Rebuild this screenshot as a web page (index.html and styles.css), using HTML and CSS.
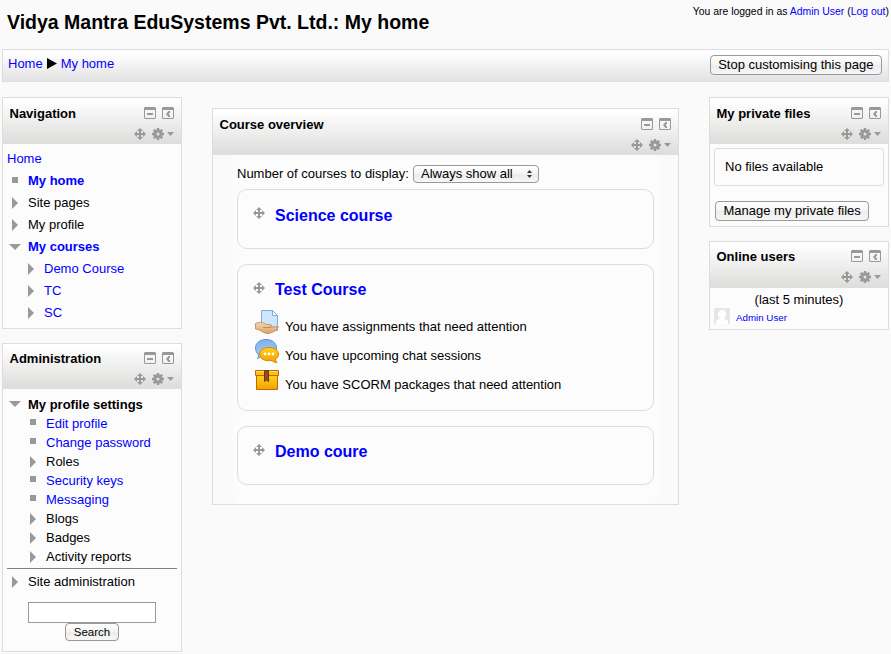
FILE: index.html
```html
<!DOCTYPE html>
<html lang="en">
<head>
<meta charset="utf-8">
<title>Vidya Mantra EduSystems Pvt. Ltd.: My home</title>
<link rel="stylesheet" href="styles.css">
</head>
<body>
<svg class="sprite" width="0" height="0">
  <defs>
    <linearGradient id="gold" x1="0" y1="0" x2="0" y2="1"><stop offset="0" stop-color="#ffd21f"/><stop offset="1" stop-color="#f5a000"/></linearGradient>
    <linearGradient id="blue" x1="0" y1="0" x2="0" y2="1"><stop offset="0" stop-color="#7fb2f0"/><stop offset="1" stop-color="#a9cffa"/></linearGradient>
    <linearGradient id="skin" x1="0" y1="0" x2="0" y2="1"><stop offset="0" stop-color="#f7d5ab"/><stop offset="1" stop-color="#dda26a"/></linearGradient>
  </defs>
  <symbol id="hide" viewBox="0 0 12 12"><path fill="#999" fill-rule="evenodd" d="M1 0h10l1 1v10l-1 1H1l-1-1V1zM1 3v8h10V3zM3 6h6v2H3z"/></symbol>
  <symbol id="dock" viewBox="0 0 12 12"><path fill="#999" fill-rule="evenodd" d="M1 0h10l1 1v10l-1 1H1l-1-1V1zM1 3v8h10V3zM6.500 4H8v2H7v2h1v2H6.500L4 7z"/></symbol>
  <symbol id="move" viewBox="0 0 12 12"><path fill="#999" d="M6 0l3 3H7v2h2V3l3 3-3 3V7H7v2h2l-3 3-3-3h2V7H3v2L0 6l3-3v2h2V3H3z"/></symbol>
  <symbol id="gear" viewBox="0 0 12 12"><path fill="#999" fill-rule="evenodd" d="M4.800 0h2.400v1.500l1.100.5 1.100-1.100 1.700 1.700L10 3.700l.5 1.100H12v2.400h-1.500L10 8.300l1.100 1.100-1.700 1.700L8.300 10l-1.100.5V12H4.800v-1.500L3.700 10l-1.100 1.100L.9 9.400 2 8.300l-.5-1.100H0V4.800h1.500L2 3.700.9 2.600 2.600.9 3.700 2l1.100-.5zM6 4.500a1.500 1.500 0 1 0 0 3 1.500 1.500 0 0 0 0-3z"/></symbol>
  <symbol id="closed" viewBox="0 0 12 12"><path fill="#999" d="M3 0l6 6-6 6z"/></symbol>
  <symbol id="open" viewBox="0 0 12 12"><path fill="#999" d="M0 3h12L6 9z"/></symbol>
  <symbol id="item" viewBox="0 0 12 12"><rect x="3" y="3" width="6" height="6" fill="#999"/></symbol>
</svg>

<header class="page-header">
  <h1>Vidya Mantra EduSystems Pvt. Ltd.: My home</h1>
  <div class="login">You are logged in as <a href="#">Admin User</a> (<a href="#">Log out</a>)</div>
</header>

<nav class="navbar">
  <div class="crumbs"><a href="#">Home</a><svg class="sep" viewBox="0 0 10 11"><path d="M0 0l10 5.500L0 11z"/></svg><a href="#">My home</a></div>
  <button class="btn">Stop customising this page</button>
</nav>

<div class="columns">
  <div class="side">
    <section class="block nav-block">
      <div class="head"><h2>Navigation</h2><div class="tools"><div><svg><use href="#hide"/></svg><svg><use href="#dock"/></svg></div><div><svg><use href="#move"/></svg><svg><use href="#gear"/></svg><i></i></div></div></div>
      <ul class="tree nav-tree">
        <li class="root"><a href="#">Home</a></li>
        <li class="current"><svg><use href="#item"/></svg><a class="strong" href="#">My home</a></li>
        <li><svg><use href="#closed"/></svg>Site pages</li>
        <li><svg><use href="#closed"/></svg>My profile</li>
        <li><svg><use href="#open"/></svg><a class="strong" href="#">My courses</a></li>
        <li class="sub"><svg><use href="#closed"/></svg><a href="#">Demo Course</a></li>
        <li class="sub"><svg><use href="#closed"/></svg><a href="#">TC</a></li>
        <li class="sub"><svg><use href="#closed"/></svg><a href="#">SC</a></li>
      </ul>
    </section>

    <section class="block admin-block">
      <div class="head"><h2>Administration</h2><div class="tools"><div><svg><use href="#hide"/></svg><svg><use href="#dock"/></svg></div><div><svg><use href="#move"/></svg><svg><use href="#gear"/></svg><i></i></div></div></div>
      <ul class="tree admin-tree">
        <li class="strong current"><svg><use href="#open"/></svg>My profile settings</li>
        <li class="sub leaf"><svg><use href="#item"/></svg><a href="#">Edit profile</a></li>
        <li class="sub leaf"><svg><use href="#item"/></svg><a href="#">Change password</a></li>
        <li class="sub"><svg><use href="#closed"/></svg>Roles</li>
        <li class="sub leaf"><svg><use href="#item"/></svg><a href="#">Security keys</a></li>
        <li class="sub leaf"><svg><use href="#item"/></svg><a href="#">Messaging</a></li>
        <li class="sub"><svg><use href="#closed"/></svg>Blogs</li>
        <li class="sub"><svg><use href="#closed"/></svg>Badges</li>
        <li class="sub"><svg><use href="#closed"/></svg>Activity reports</li>
        <li class="site"><svg><use href="#closed"/></svg>Site administration</li>
      </ul>
      <form class="search"><input type="text" aria-label="Search"><button type="button" class="btn">Search</button></form>
    </section>
  </div>

  <main class="block overview">
    <div class="head"><h2>Course overview</h2><div class="tools"><div><svg><use href="#hide"/></svg><svg><use href="#dock"/></svg></div><div><svg><use href="#move"/></svg><svg><use href="#gear"/></svg><i></i></div></div></div>
    <div class="content">
      <div class="count">Number of courses to display: <span class="select">Always show all<svg viewBox="0 0 5 8"><path fill="#333" d="M2.500 0L5 3H0zM0 5h5L2.500 8z"/></svg></span></div>
      <article class="course">
        <h3><svg><use href="#move"/></svg><a href="#">Science course</a></h3>
      </article>
      <article class="course tall">
        <h3><svg><use href="#move"/></svg><a href="#">Test Course</a></h3>
        <div class="notice">
          <svg viewBox="0 0 24 24"><path d="M6.500.5h11l5 5v15h-16z" fill="#cde6fb" stroke="#79addf"/><path d="M17.500.5v5h5z" fill="#fff" stroke="#79addf"/><path d="M.5 13.500c4-2 7-1 10 .5 2 1 5 0 6 1 .8 1-1 2-3 2.500 4 0 6-1.500 10-.5-2 4-7 6.500-12 6.500-4-1-6-4-11-4.500z" fill="url(#skin)" stroke="#bb814c" stroke-width=".8"/><path d="M8 17.500h6" stroke="#bb814c" stroke-width=".8"/></svg>
          You have assignments that need attention</div>
        <div class="notice">
          <svg viewBox="0 0 24 24"><path d="M11 .5C17 .5 21.500 4 21.500 9S17 17.500 11 17.500q-3 0-5-.7-1 2-3.500 2.700 1.500-2 .8-4Q.5 13 .5 9C.5 4 5 .5 11 .5z" fill="url(#blue)" stroke="#5e91d7"/><path d="M14 8.500c5.500 0 9.500 2.500 9.500 6.500 0 2.500-1 4-3 5 0 1.500.5 2.500 1.500 3.500-2.500 0-4-1-5-2-7 1-12.500-1.500-12.500-6.500 0-4 4-6.500 9.500-6.500z" fill="url(#gold)" stroke="#d18a00"/><g fill="#fff"><circle cx="10" cy="15" r="1.400"/><circle cx="14" cy="15" r="1.400"/><circle cx="18" cy="15" r="1.400"/></g></svg>
          You have upcoming chat sessions</div>
        <div class="notice">
          <svg viewBox="0 0 24 24"><path d="M1.500 7h21v14.500h-21z" fill="url(#gold)" stroke="#b96b00"/><path d="M.5 2.500h23v5H.5z" fill="#ffbd18" stroke="#b96b00"/><path d="M1 3.500h22" stroke="#ffdc68"/><path d="M9.500 2.500h4v11l-2-1.500-2 1.500z" fill="#935024" stroke="#733612"/></svg>
          You have SCORM packages that need attention</div>
      </article>
      <article class="course short">
        <h3><svg><use href="#move"/></svg><a href="#">Demo coure</a></h3>
      </article>
    </div>
  </main>

  <div class="side">
    <section class="block files">
      <div class="head"><h2>My private files</h2><div class="tools"><div><svg><use href="#hide"/></svg><svg><use href="#dock"/></svg></div><div><svg><use href="#move"/></svg><svg><use href="#gear"/></svg><i></i></div></div></div>
      <div class="empty">No files available</div>
      <button class="btn">Manage my private files</button>
    </section>
    <section class="block online">
      <div class="head"><h2>Online users</h2><div class="tools"><div><svg><use href="#hide"/></svg><svg><use href="#dock"/></svg></div><div><svg><use href="#move"/></svg><svg><use href="#gear"/></svg><i></i></div></div></div>
      <div class="period">(last 5 minutes)</div>
      <div class="user"><svg viewBox="0 0 16 16"><path fill="#e6e6e6" d="M0 0h16v16H0z"/><path fill="#fff" d="M8 2c2.500 0 4 1.700 4 4 0 1.500-.6 2.800-1.500 3.600v1.200l3 1.700c.6.400.7 1.500.7 3.500H1.800c0-2 .1-3.100.7-3.500l3-1.700V9.600C4.600 8.800 4 7.500 4 6c0-2.300 1.500-4 4-4z"/></svg><a href="#">Admin User</a></div>
    </section>
  </div>
</div>
</body>
</html>
```
FILE: styles.css
```css
* { box-sizing: border-box; }
body {
  margin: 0;
  height: 654px;
  overflow: hidden;
  background: #fafafa;
  color: #000;
  font: 13px/16px "Liberation Sans", Arial, sans-serif;
}
h1, h2, h3, ul { margin: 0; padding: 0; }
a { color: #00f; text-decoration: none; }
.sprite { position: absolute; }
.strong { font-weight: bold; }

.page-header {
  display: flex;
  justify-content: space-between;
  height: 49px;
  padding: 5px 2px 0 7px;
}
.page-header h1 { font-size: 19.5px; line-height: 34px; }
.login { font-size: 10.45px; line-height: 14px; }

.navbar {
  display: flex;
  justify-content: space-between;
  align-items: flex-start;
  width: 887px;
  height: 33px;
  margin-left: 2px;
  padding: 5px 6px 0 5px;
  border: 1px solid #ddd;
  background: linear-gradient(#fff 10%, #e2e2e2);
}
.crumbs { display: flex; align-items: center; padding-top: 1px; }
.sep { width: 10px; height: 11px; margin: -2px 4px 0 4px; }

.btn {
  height: 20px;
  padding: 0 7.5px;
  border: 1px solid #999;
  border-radius: 4px;
  background: linear-gradient(#fff, #f4f4f4 50%, #ececec 51%, #f6f6f6);
  color: #000;
  font: 13px/16px "Liberation Sans", Arial, sans-serif;
  white-space: nowrap;
}

.columns {
  display: grid;
  grid-template-columns: 180px 467px 180px;
  column-gap: 30px;
  align-items: start;
  padding: 15px 0 0 2px;
}
.side { display: flex; flex-direction: column; gap: 14px; }
.block { border: 1px solid #ddd; background: #fcfcfc; }
.head {
  display: flex;
  justify-content: space-between;
  height: 46px;
  padding: 8px 7px 0 6.5px;
  background: linear-gradient(#fff 5%, #dededd 95%);
}
.admin-block .head { height: 45px; padding-top: 7px; }
.online .head { padding-top: 7px; }
.head h2 { font-size: 13px; line-height: 16px; }
.tools > div { display: flex; justify-content: flex-end; gap: 6px; height: 21px; padding-top: 1px; }
.tools svg, .tree svg, h3 svg { width: 12px; height: 12px; flex: none; }
.tools i {
  width: 7px;
  height: 4px;
  margin: 4px 0 0 -3px;
  background: #999;
  clip-path: polygon(0 0, 100% 0, 50% 100%);
}

.tree { list-style: none; }
.tree li { display: flex; align-items: center; gap: 7px; padding-left: 6px; }
.tree .current svg { margin-top: -2px; }
.nav-block { height: 232px; }
.nav-tree { padding-top: 4px; }
.nav-tree li { height: 22px; }
.nav-tree .root { padding-left: 4px; }
.nav-tree .sub { padding-left: 22px; }

.admin-block { height: 309px; }
.admin-tree { padding-top: 6px; }
.admin-tree li { height: 19px; }
.admin-tree .sub { padding-left: 24px; }
.admin-tree .leaf svg { margin-top: -3px; }
.admin-tree .site {
  height: 26px;
  margin: 2px 4px 0;
  padding: 0 0 0 2px;
  border-top: 1px solid #808080;
}
.search { display: flex; flex-direction: column; align-items: center; padding-top: 8px; }
.search input { width: 128px; height: 21px; border: 1px solid #999; background: #fff; }
.search .btn { height: 18px; font-size: 11.5px; line-height: 16px; }

.overview { height: 397px; margin-top: 11px; background: #fafafa; }
.overview .content { height: 349px; margin: 0 20px; padding: 9px 4px 0; background: #fcfcfc; border-radius: 0 0 10px 10px; }
.count { display: flex; align-items: center; gap: 4px; height: 19px; margin-bottom: 6px; }
.select {
  display: flex;
  justify-content: space-between;
  align-items: center;
  width: 126px;
  height: 18px;
  padding: 0 6px 0 7px;
  border: 1px solid #999;
  border-radius: 4px;
  background: linear-gradient(#fff, #f4f4f4 50%, #ececec 51%, #f6f6f6);
}
.select svg { width: 5px; height: 8px; }
.course {
  height: 60px;
  margin-bottom: 15px;
  padding: 15px;
  border: 1px solid #ddd;
  border-radius: 10px;
}
.course.tall { height: 147px; }
.course.short { height: 59px; }
.course h3 { display: flex; gap: 10px; height: 29px; padding-top: 1px; font-size: 16px; line-height: 20px; }
.course.tall h3 { height: 30px; }
.course h3 svg { margin-top: 1px; }
.course.tall a, .course.short a { margin-top: -1px; }
.notice { display: flex; height: 29px; gap: 6px; padding-left: 2px; line-height: 34px; }
.notice svg { width: 24px; height: 24px; }

.files { height: 130px; }
.empty {
  width: 170px;
  height: 38px;
  margin: 4px 0 15px 4px;
  padding: 10px;
  border: 1px solid #ddd;
  border-radius: 3px;
}
.files .btn { margin-left: 5px; }
.online { height: 89px; }
.period { padding-top: 4px; text-align: center; }
.user { display: flex; align-items: center; gap: 6px; height: 16px; padding-left: 4px; font-size: 9.75px; }
.user svg { width: 16px; height: 16px; }
.user a { padding-top: 3px; }
```
